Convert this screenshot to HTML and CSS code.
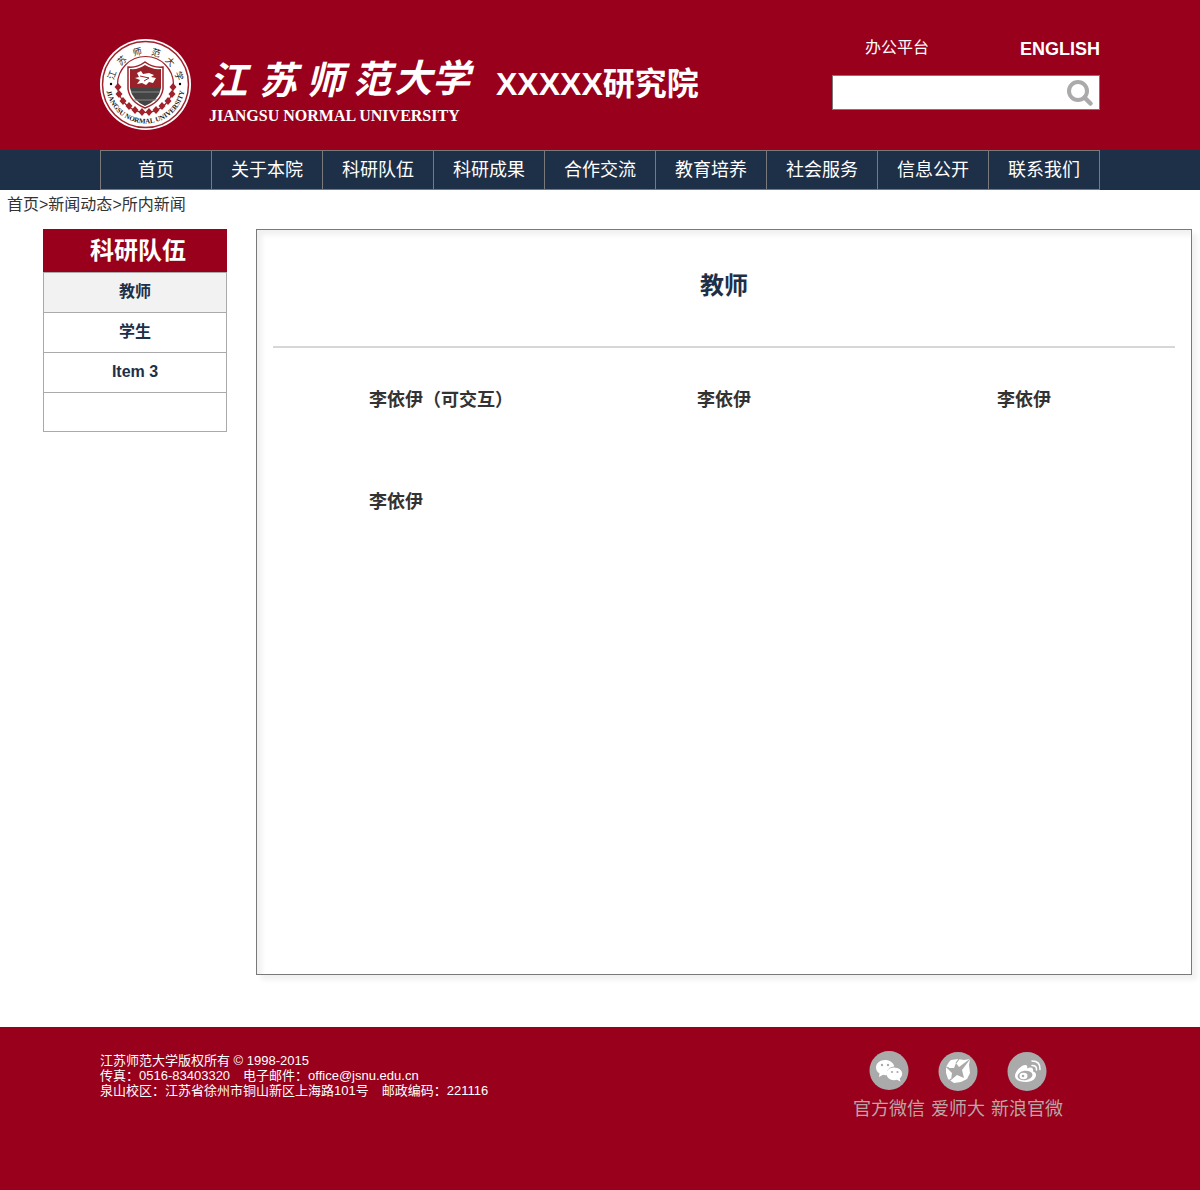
FILE: index.html
```html
<!DOCTYPE html>
<html lang="zh-CN">
<head>
<meta charset="utf-8">
<meta name="viewport" content="width=device-width, initial-scale=1">
<title>教师 - XXXXX研究院</title>
<link rel="stylesheet" href="styles.css">
</head>
<body>
<header class="site-header">
  <div class="container header-inner">
    <a class="brand" href="#">
      <svg class="brand-logo" viewBox="0 0 370 92" role="img" aria-label="江苏师范大学">
        <defs>
          <path id="ring-bottom" d="M6 45a39.500 39.500 0 0 0 79 0"/>
          <g id="leaf"><path d="M0-4L3.500 0 0 4-3.500 0z"/></g>
        </defs>
        <circle cx="45.500" cy="45.500" r="45.500" fill="#fff"/>
        <circle cx="45.500" cy="45.500" r="43" fill="none" stroke="#a0222c" stroke-width="1.500"/>
        <circle cx="45.500" cy="45.500" r="28" fill="none" stroke="#a0222c" stroke-width="1.200"/>
        <g fill="#a0222c">
          <use href="#leaf" x="18" y="48"/><use href="#leaf" x="19" y="55"/><use href="#leaf" x="23" y="62"/><use href="#leaf" x="29" y="67"/><use href="#leaf" x="35" y="71"/><use href="#leaf" x="42" y="73"/><use href="#leaf" x="49" y="73"/><use href="#leaf" x="56" y="71"/><use href="#leaf" x="62" y="67"/><use href="#leaf" x="68" y="62"/><use href="#leaf" x="72" y="55"/><use href="#leaf" x="73" y="48"/>
        </g>
        <path d="M28 28q9 1 17-5 8 6 18 5v22q-2 13-18 19-15-6-17-19z" fill="#fff" stroke="#a0222c" stroke-width="1.500"/>
        <path d="M30 30q8 1 15-4 8 5 16 4v19H30z" fill="#98222a"/>
        <path d="M30 49h31q-2 12-16 18-13-6-15-18z" fill="#444"/>
        <path d="M31 53h29M34 61h23" stroke="#888" stroke-width="1"/>
        <path d="M37 34l4-2 2 3 6-1 5 2-3 2 5 1-3 5-4-1-3 3-4-2-5 1 3-4-5-2 4-1z" fill="#fff"/>
        <path d="M40 37l9 2-5 3" stroke="#98222a" stroke-width="1" fill="none"/>
        <g class="seal-top">
          <text text-anchor="middle" transform="translate(15 37) rotate(-70)">江</text>
          <text text-anchor="middle" transform="translate(24 24) rotate(-42)">苏</text>
          <text text-anchor="middle" transform="translate(38 16) rotate(-12)">师</text>
          <text text-anchor="middle" transform="translate(55 17) rotate(18)">范</text>
          <text text-anchor="middle" transform="translate(68 25) rotate(45)">大</text>
          <text text-anchor="middle" transform="translate(76 38) rotate(70)">学</text>
        </g>
        <circle cx="11" cy="45" r="1.200"/><circle cx="80" cy="45" r="1.200"/>
        <text class="seal-name"><textPath href="#ring-bottom" startOffset="50%" text-anchor="middle">JIANGSU NORMAL UNIVERSITY</textPath></text>
        <g class="brand-cn">
          <text x="109" y="55">江</text><text x="159" y="55">苏</text><text x="206" y="55">师</text><text x="253" y="54">范</text><text x="294" y="53">大</text><text x="332" y="53">学</text>
        </g>
        <text class="brand-en" x="109" y="82">JIANGSU NORMAL UNIVERSITY</text>
      </svg>
      <span class="brand-title">XXXXX研究院</span>
    </a>
    <div class="header-tools">
      <div class="tool-links">
        <a href="#">办公平台</a>
        <a class="lang-link" href="#">ENGLISH</a>
      </div>
      <form class="search">
        <input class="search-input" type="text" aria-label="搜索">
        <button class="search-button" type="button" aria-label="搜索">
          <svg viewBox="0 0 28 28" width="28" height="28"><circle cx="12" cy="12" r="9" fill="none" stroke="#aaa" stroke-width="4"/><path d="M18.500 18.500l6 6" stroke="#aaa" stroke-width="4.500" stroke-linecap="round"/></svg>
        </button>
      </form>
    </div>
  </div>
</header>
<nav class="main-nav">
  <div class="container nav-list">
    <a href="#">首页</a><a href="#">关于本院</a><a href="#">科研队伍</a><a href="#">科研成果</a><a href="#">合作交流</a><a href="#">教育培养</a><a href="#">社会服务</a><a href="#">信息公开</a><a href="#">联系我们</a>
  </div>
</nav>
<div class="breadcrumb"><a href="#">首页</a>&gt;<a href="#">新闻动态</a>&gt;<a href="#">所内新闻</a></div>
<main class="content">
  <aside class="sidebar">
    <h2 class="sidebar-title">科研队伍</h2>
    <ul class="side-menu">
      <li class="active"><a href="#">教师</a></li>
      <li><a href="#">学生</a></li>
      <li><a href="#">Item 3</a></li>
      <li></li>
    </ul>
  </aside>
  <section class="panel">
    <h1 class="panel-title">教师</h1>
    <div class="people">
      <a href="#">李依伊（可交互）</a>
      <a href="#">李依伊</a>
      <a href="#">李依伊</a>
      <a href="#">李依伊</a>
    </div>
  </section>
</main>
<footer class="site-footer">
  <div class="container footer-inner">
    <div class="contact">
      <p>江苏师范大学版权所有 © 1998-2015</p>
      <p>传真：0516-83403320&emsp;电子邮件：office@jsnu.edu.cn</p>
      <p>泉山校区：江苏省徐州市铜山新区上海路101号&emsp;邮政编码：221116</p>
    </div>
    <div class="social">
      <a href="#">
        <svg viewBox="0 0 40 40" width="40" height="40"><circle cx="20" cy="19.500" r="19.500" fill="#aaa"/><path d="M16 9c-5 0-9 3.400-9 7.500 0 2.500 1.300 4.500 3.500 6L10 26l4-2.200q2 .6 4 .2c-1-5 3-8.500 7.300-8.500C24.500 11.500 20.500 9 16 9z" fill="#fff"/><path d="M25 16.500c-4.300 0-7.500 2.800-7.500 6.300s3.200 6.400 7.500 6.400q1.700 0 3-.4l3.500 1.700-.8-3c1.500-1.200 2.500-2.800 2.500-4.700 0-3.500-3.700-6.300-8.200-6.300z" fill="#fff"/><g fill="#aaa"><circle cx="13" cy="14" r="1.200"/><circle cx="19" cy="14" r="1.200"/><circle cx="23" cy="21" r="1.100"/><circle cx="28.500" cy="21" r="1.100"/></g></svg>
        <span>官方微信</span>
      </a>
      <a href="#">
        <svg viewBox="0 0 40 40" width="40" height="40"><circle cx="20" cy="20.500" r="19.500" fill="#aaa"/><path d="M13 9l7-1 6 1 6-1-1 6 1 8-3 6-6 3-7 1-6-4-2-6 0-6 3-5z" fill="#fff"/><path d="M33 7L24 19 26 27 19 24 13 29 14 22 9 17h7l2-5 3 4z" fill="#aaa"/><path d="M18 12l3-4M11 17l-3-1M13 28l-2 2" stroke="#aaa" stroke-width="1.200"/></svg>
        <span>爱师大</span>
      </a>
      <a href="#">
        <svg viewBox="0 0 40 40" width="40" height="40"><circle cx="20" cy="20.500" r="19.500" fill="#aaa"/><path d="M18 14c-3 0-10 6-10 11 0 4 5 6 11 6 7 0 10-4 10-7 0-2-1-3-3-3.500.8-4-2-5-6-3 .8-2.500 0-3.500-2-3.500z" fill="#fff"/><ellipse cx="18" cy="24.500" rx="7.500" ry="4.700" fill="#aaa" transform="rotate(-8 18 24.500)"/><ellipse cx="16.500" cy="25" rx="4" ry="3.200" fill="#fff"/><circle cx="16" cy="25" r="1.300" fill="#aaa"/><path d="M25 14.500q5 0 4.500 4.500M25 10q8.500 0 8 8.500" fill="none" stroke="#fff" stroke-width="1.600" stroke-linecap="round"/></svg>
        <span>新浪官微</span>
      </a>
    </div>
  </div>
</footer>
</body>
</html>
```
FILE: styles.css
```css
* { box-sizing: border-box; }

body {
  margin: 0;
  min-height: 100vh;
  display: flex;
  flex-direction: column;
  background: #fff;
  color: #333;
  font-family: "Liberation Sans", Arial, "Noto Sans CJK SC", sans-serif;
  font-size: 16px;
}

a { color: inherit; text-decoration: none; }
h1, h2, p, ul { margin: 0; padding: 0; }
ul { list-style: none; }

.container {
  width: 100%;
  max-width: 1000px;
  margin: 0 auto;
}

.site-header { background: #99001c; color: #fff; }

.header-inner {
  display: flex;
  justify-content: space-between;
  min-height: 150px;
  padding-top: 39px;
}

.brand { display: flex; align-items: flex-start; gap: 26px; }
.brand-logo { width: 370px; height: 92px; overflow: visible; }
.brand-title { font-size: 32px; font-weight: bold; line-height: 40px; padding-top: 25px; }

.brand-cn { fill: #fff; font-family: "Noto Sans CJK SC", sans-serif; font-size: 38px; font-weight: bold; font-style: italic; }
.brand-en { fill: #fff; font-family: "Liberation Serif", serif; font-size: 16px; font-weight: bold; }
.seal-top { fill: #222; font-family: "Noto Sans CJK SC", sans-serif; font-size: 9px; }
.seal-name { fill: #222; font-family: "Liberation Serif", serif; font-size: 7px; font-weight: bold; }

.header-tools { width: 268px; }

.tool-links {
  display: flex;
  justify-content: space-between;
  height: 20px;
  margin-bottom: 16px;
  padding-left: 33px;
  line-height: 18px;
}

.lang-link { font-size: 18px; font-weight: bold; line-height: 20px; }

.search {
  display: flex;
  height: 35px;
  background: #fff;
  border: 1px solid #797979;
}

.search-input {
  flex: 1;
  min-width: 0;
  padding: 0 8px;
  border: 0;
  outline: 0;
  background: transparent;
  font: inherit;
}

.search-button {
  display: flex;
  align-items: center;
  padding: 0 5px;
  border: 0;
  background: transparent;
}

.main-nav { background: #1e2f48; color: #fff; }

.nav-list {
  display: flex;
  height: 40px;
  border: 1px solid #797979;
}

.nav-list a {
  flex: 1;
  font-size: 18px;
  line-height: 38px;
  text-align: center;
}

.nav-list a + a { border-left: 1px solid #797979; }

.breadcrumb { padding: 5px 7px 3px; line-height: 20px; }

.content {
  display: flex;
  flex: 1;
  align-items: stretch;
  gap: 29px;
  padding: 11px 8px 52px 43px;
}

.sidebar { flex: 0 0 184px; }

.sidebar-title {
  padding-left: 6px;
  background: #99001c;
  color: #fff;
  font-size: 24px;
  line-height: 43px;
  text-align: center;
}

.side-menu { border: 1px solid #aaa; }

.side-menu li {
  height: 39px;
  color: #1e2f48;
  font-weight: bold;
  line-height: 38px;
  text-align: center;
}

.side-menu li + li { height: 40px; border-top: 1px solid #aaa; }
.side-menu li:last-child { height: 39px; }
.side-menu a { display: block; }
.side-menu .active { background: #f2f2f2; }

.panel {
  flex: 1;
  padding: 36px 16px;
  border: 1px solid #797979;
  box-shadow: 5px 5px 5px rgba(0, 0, 0, .06), inset 5px 5px 5px rgba(0, 0, 0, .06);
}

.panel-title {
  padding-bottom: 40px;
  border-bottom: 2px solid #d7d7d7;
  color: #1e2f48;
  font-size: 24px;
  line-height: 40px;
  text-align: center;
}

.people {
  display: grid;
  grid-template-columns: 328fr 300fr 178fr;
  row-gap: 72px;
  padding: 37px 0 0 96px;
  font-size: 18px;
  font-weight: bold;
  line-height: 30px;
}

.site-footer { background: #99001c; color: #fff; }

.footer-inner {
  display: flex;
  justify-content: space-between;
  min-height: 163px;
  padding-top: 24px;
}

.contact { padding-top: 2px; font-size: 13px; line-height: 15px; }

.social {
  display: flex;
  align-items: flex-start;
  gap: 6px;
  padding-right: 37px;
  color: #bba6a6;
  font-size: 18px;
  line-height: 36px;
}

.social a { display: flex; flex-direction: column; align-items: center; }
```
